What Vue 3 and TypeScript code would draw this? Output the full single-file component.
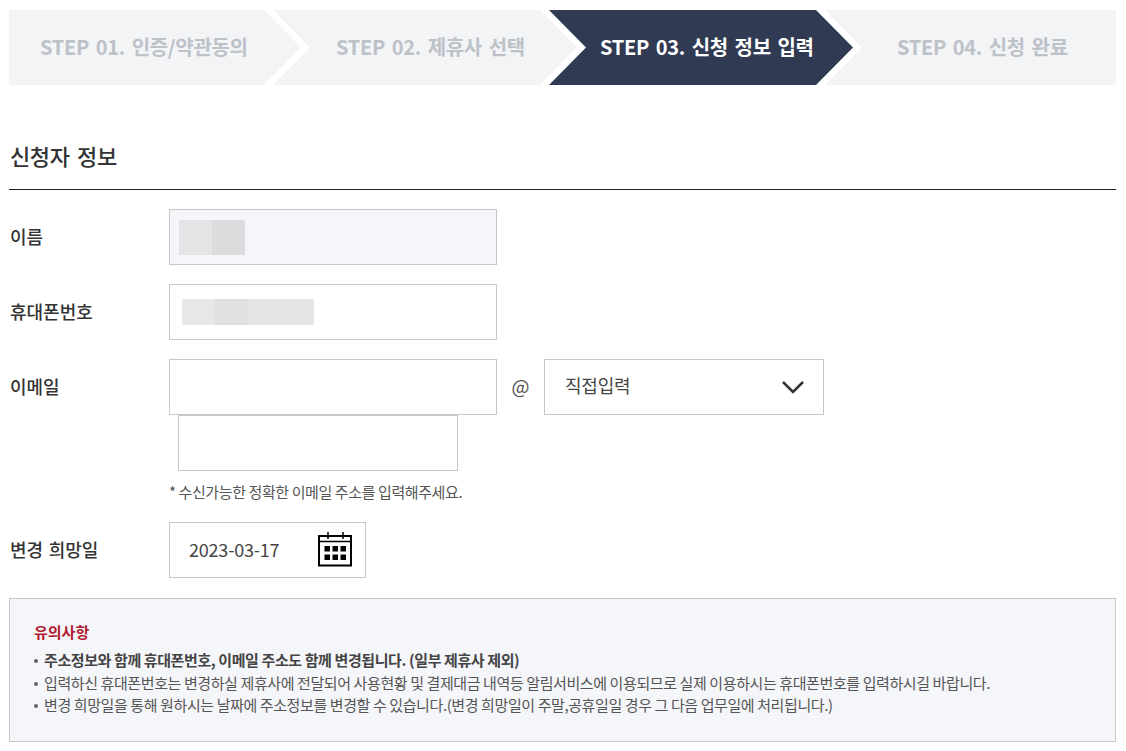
<script setup lang="ts">
const steps = [
  { label: 'STEP 01. 인증/약관동의', cls: 'first' },
  { label: 'STEP 02. 제휴사 선택', cls: 'second' },
  { label: 'STEP 03. 신청 정보 입력', cls: 'third active' },
  { label: 'STEP 04. 신청 완료', cls: 'last' }
]

const notices = [
  { text: '주소정보와 함께 휴대폰번호, 이메일 주소도 함께 변경됩니다. (일부 제휴사 제외)', strong: true },
  { text: '입력하신 휴대폰번호는 변경하실 제휴사에 전달되어 사용현황 및 결제대금 내역등 알림서비스에 이용되므로 실제 이용하시는 휴대폰번호를 입력하시길 바랍니다.', strong: false },
  { text: '변경 희망일을 통해 원하시는 날짜에 주소정보를 변경할 수 있습니다.(변경 희망일이 주말,공휴일일 경우 그 다음 업무일에 처리됩니다.)', strong: false }
]
</script>

<template>
  <div class="page">
    <ol class="steps">
      <li v-for="step in steps" :key="step.label" class="step" :class="step.cls">{{ step.label }}</li>
    </ol>

    <h2 class="title">신청자 정보</h2>

    <div class="form">
      <div class="row">
        <label class="label">이름</label>
        <div class="field readonly name-field">
          <div class="blur name-blur"><i></i><i></i></div>
        </div>
      </div>

      <div class="row">
        <label class="label">휴대폰번호</label>
        <div class="field phone-field">
          <div class="blur phone-blur"><i></i><i></i><i></i></div>
        </div>
      </div>

      <div class="row email-row">
        <label class="label">이메일</label>
        <div class="email">
          <div class="email-line">
            <input class="field" type="text" />
            <span class="at">@</span>
            <div class="field select">
              <span class="select-text">직접입력</span>
              <svg width="24" height="14" viewBox="0 0 24 14" fill="none">
                <path d="M2 2l10 10L22 2" stroke="#333" stroke-width="2.6" />
              </svg>
            </div>
          </div>
          <input class="field domain" type="text" />
          <p class="help">* 수신가능한 정확한 이메일 주소를 입력해주세요.</p>
        </div>
      </div>

      <div class="row date-row">
        <label class="label">변경 희망일</label>
        <div class="field date">
          <span>2023-03-17</span>
          <svg width="35" height="36" viewBox="0 0 35 36" fill="none">
            <rect x="1" y="5" width="32" height="29.5" stroke="#000" stroke-width="2" />
            <path d="M1 10.5h32" stroke="#000" stroke-width="1.5" />
            <path d="M10 1v7M25 1v7" stroke="#000" stroke-width="1.5" />
            <g fill="#000">
              <rect x="6.5" y="15" width="5.5" height="5.5" />
              <rect x="14.5" y="15" width="5.5" height="5.5" />
              <rect x="22.5" y="15" width="5.5" height="5.5" />
              <rect x="6.5" y="23.5" width="5.5" height="5.5" />
              <rect x="14.5" y="23.5" width="5.5" height="5.5" />
              <rect x="22.5" y="23.5" width="5.5" height="5.5" />
            </g>
          </svg>
        </div>
      </div>
    </div>

    <div class="notice">
      <h3>유의사항</h3>
      <ul>
        <li v-for="item in notices" :key="item.text" :class="{ strong: item.strong }">{{ item.text }}</li>
      </ul>
    </div>
  </div>
</template>

<style>
html,
body {
  margin: 0;
  background: #fff;
}
</style>

<style scoped>
.page {
  width: 1107px;
  padding: 10px 10px 9px 9px;
  font-family: "Noto Sans CJK KR", "Noto Sans", sans-serif;
  color: #333;
}

.steps {
  display: flex;
  margin: 0;
  padding: 0;
  list-style: none;
}

.step {
  display: flex;
  align-items: center;
  box-sizing: border-box;
  height: 75px;
  margin-left: -28px;
  padding-bottom: 3px;
  background: #f3f4f6;
  color: #bdc1c8;
  font-size: 20px;
  font-weight: 700;
  letter-spacing: -0.3px;
  word-spacing: 2.5px;
  white-space: nowrap;
}

.first {
  width: 292px;
  margin-left: 0;
  padding-left: 31px;
  clip-path: polygon(0 0, 255px 0, 292px 50%, 255px 100%, 0 100%);
}

.second,
.third {
  width: 304px;
  clip-path: polygon(0 0, 267px 0, 304px 50%, 267px 100%, 0 100%, 37px 50%);
}

.second {
  padding-left: 63px;
}

.third {
  padding-left: 51px;
}

.last {
  width: 291px;
  padding-left: 72px;
  clip-path: polygon(0 0, 100% 0, 100% 100%, 0 100%, 37px 50%);
}

.active {
  background: #303a52;
  color: #fff;
}

.title {
  margin: 0;
  padding: 51px 0 15px 1px;
  border-bottom: 1px solid #222;
  font-size: 22px;
  font-weight: 500;
  line-height: 38px;
  letter-spacing: -0.4px;
  word-spacing: 3px;
}

.form {
  padding-top: 19px;
}

.row {
  display: grid;
  grid-template-columns: 160px 1fr;
  margin-bottom: 19px;
}

.email-row {
  margin-bottom: 20px;
}

.label {
  padding-left: 1px;
  font-size: 18px;
  font-weight: 500;
  line-height: 54px;
  word-spacing: 1.5px;
}

.field {
  display: flex;
  align-items: center;
  box-sizing: border-box;
  width: 328px;
  height: 56px;
  margin: 0;
  padding: 0;
  border: 1px solid #c8c8c8;
  border-radius: 0;
  background: #fff;
  outline: none;
}

.readonly {
  background: #f5f6fa;
}

.blur {
  display: flex;
  border-radius: 1px;
  overflow: hidden;
}

.blur i {
  display: block;
  height: 100%;
}

.name-field {
  padding-left: 9px;
}

.name-blur {
  width: 66px;
  height: 35px;
}

.name-blur i {
  background: #e3e4e6;
  width: 33px;
}

.name-blur i + i {
  background: #dbdcde;
}

.phone-field {
  padding-left: 12px;
}

.phone-blur {
  width: 132px;
  height: 26px;
}

.phone-blur i {
  width: 33px;
  background: #e7e7e7;
}

.phone-blur i:nth-child(2) {
  background: #e0e0e0;
}

.phone-blur i:nth-child(3) {
  width: 66px;
  background: #e5e5e5;
}

.email-line {
  display: flex;
  align-items: center;
}

.at {
  width: 47px;
  padding-bottom: 3px;
  text-align: center;
  font-size: 19px;
  color: #555;
}

.select {
  justify-content: space-between;
  width: 280px;
  padding: 0 18px 0 20px;
  font-size: 18px;
  letter-spacing: -0.2px;
  color: #444;
}

.select-text {
  padding-bottom: 4px;
}

.domain {
  width: 280px;
  margin-left: 9px;
}

.help {
  margin: 11px 0 0;
  font-size: 15px;
  line-height: 20px;
  letter-spacing: -0.4px;
  color: #555;
}

.date {
  justify-content: space-between;
  width: 197px;
  padding: 0 12px 2px 19px;
  font-size: 18px;
  color: #444;
  letter-spacing: -0.2px;
}

.date-row {
  margin-bottom: 20px;
}

.notice {
  box-sizing: border-box;
  height: 144px;
  padding: 22px 24px 0;
  border: 1px solid #c8c8c8;
  background: #f5f6fa;
}

.notice h3 {
  margin: 0 0 6px;
  font-size: 15px;
  font-weight: 700;
  line-height: 22px;
  color: #b01c2e;
}

.notice ul {
  margin: 0;
  padding: 0;
  list-style: none;
}

.notice li {
  position: relative;
  padding-left: 10px;
  font-size: 15px;
  line-height: 22.5px;
  color: #555;
  letter-spacing: -0.4px;
  white-space: nowrap;
}

.notice li::before {
  content: '';
  position: absolute;
  left: 0;
  top: 10px;
  width: 4px;
  height: 4px;
  border-radius: 50%;
  background: #666;
}

.notice li.strong {
  font-weight: 700;
  color: #444;
}
</style>
